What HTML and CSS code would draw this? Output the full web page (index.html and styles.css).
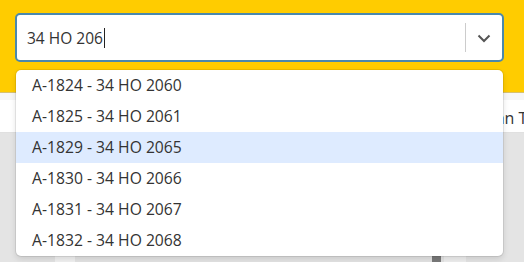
FILE: index.html
```html
<!DOCTYPE html>
<html lang="en">
<head>
    <meta charset="UTF-8">
    <title>Araç Seçimi</title>
    <link rel="stylesheet" href="styles.css">
</head>
<body>
    <div class="topbar">
        <div class="select">
            <div class="control">
                <div class="value">34 HO 206<span class="caret"></span></div>
                <span class="separator"></span>
                <span class="indicator">
                    <svg width="20" height="20" viewBox="0 0 20 20"><path d="M4.5 7.5 L10 13 L15.5 7.5" fill="none" stroke="#555" stroke-width="2"/></svg>
                </span>
            </div>
            <ul class="menu">
                <li>A-1824 - 34 HO 2060</li>
                <li>A-1825 - 34 HO 2061</li>
                <li class="focused">A-1829 - 34 HO 2065</li>
                <li>A-1830 - 34 HO 2066</li>
                <li>A-1831 - 34 HO 2067</li>
                <li>A-1832 - 34 HO 2068</li>
            </ul>
        </div>
    </div>
    <div class="tabs">
        <span class="tab">Plan Tarihi</span>
    </div>
    <div class="content">
        <div class="card-left"></div>
        <div class="scroll-thumb"></div>
        <div class="card-right"></div>
    </div>
</body>
</html>
```

FILE: styles.css
```css
:root {
    --yellow: #ffcc00;
    --border: #4a88ad;
    --text: #333;
    --hover: #deebff;
}
html, body { margin: 0; padding: 0; height: 100%; overflow: hidden; }
body { font-family: "Open Sans", "Noto Sans", sans-serif; background: #e4e4e4; color: var(--text); }
.topbar { background: var(--yellow); height: 93px; padding: 13px 20px 0 15px; box-sizing: border-box; border-bottom: 1px solid #d6c070; }
.select { position: relative; }
.control { display: flex; align-items: center; height: 49px; box-sizing: border-box; border: 2px solid var(--border); border-radius: 5px; background: white; }
.value { flex: 1; padding-left: 10px; font-size: 15.5px; display: flex; align-items: center; }
.caret { display: inline-block; width: 1px; height: 20px; background: #222; margin-left: 1px; }
.separator { width: 1px; height: 29px; background: #ccc; }
.indicator { display: flex; width: 36px; justify-content: center; }
.menu { position: absolute; top: 57px; left: 1px; right: 1px; list-style: none; margin: 0; padding: 0; background: white; border-radius: 5px; box-shadow: 0 0 0 1px rgba(0,0,0,0.08), 0 3px 6px rgba(0,0,0,0.12); z-index: 10; }
.menu li { height: 31px; line-height: 31px; padding: 0 16px; font-size: 15.7px; }
.menu li.focused { background: var(--hover); }
.tabs { height: 40px; background: white; border-top: 7px solid #f6f6f6; box-sizing: border-box; display: flex; overflow: hidden; border-bottom: 1px solid #e0e0e0; }
.tab { font-size: 16px; line-height: 36px; white-space: nowrap; padding-left: 482px; }
.content { display: flex; align-items: flex-end; height: 129px; }
.card-left { width: 20px; height: 8px; margin-left: 55px; background: #f2f2f2; }
.scroll-thumb { width: 9px; height: 8px; margin-left: 357px; background: #7a7a7a; }
.card-right { width: 22px; height: 8px; margin-left: 3px; background: #efefef; }
```
